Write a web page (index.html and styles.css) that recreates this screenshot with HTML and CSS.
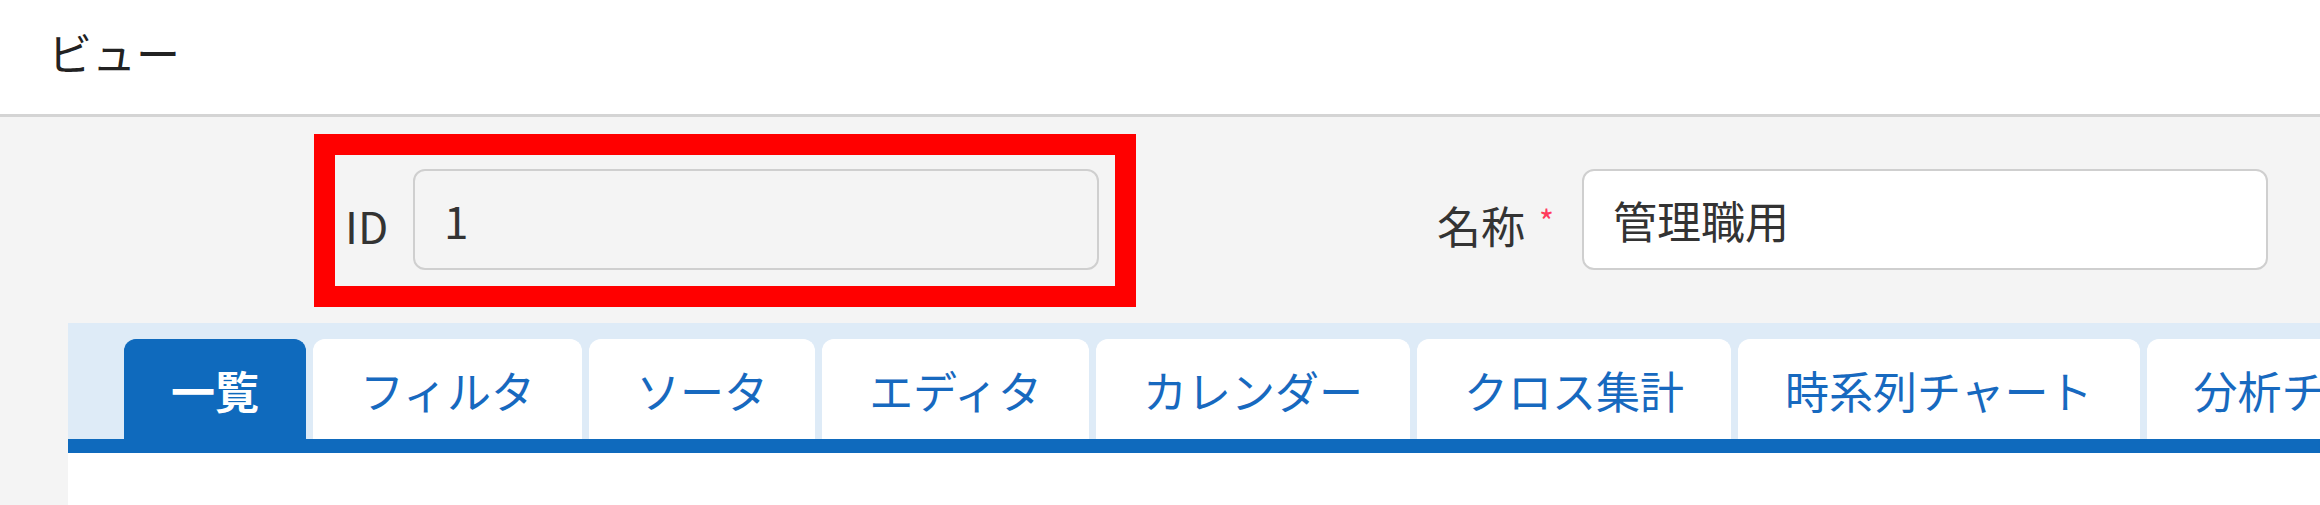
FILE: index.html
```html
<!DOCTYPE html>
<html lang="ja">
<head>
<meta charset="utf-8">
<title>ビュー</title>
<link rel="stylesheet" href="styles.css">
</head>
<body>
<header class="page-header">
  <h1 class="page-title">ビュー</h1>
</header>
<main class="page-body">
  <div class="form-row">
    <div class="field field-id highlight">
      <label class="field-label">ID</label>
      <div class="input input-readonly">1</div>
    </div>
    <div class="field field-name">
      <label class="field-label">名称<span class="required">*</span></label>
      <div class="input">管理職用</div>
    </div>
  </div>
  <section class="panel">
    <nav class="tabs">
      <div class="tab active">一覧</div>
      <div class="tab">フィルタ</div>
      <div class="tab">ソータ</div>
      <div class="tab">エディタ</div>
      <div class="tab">カレンダー</div>
      <div class="tab">クロス集計</div>
      <div class="tab">時系列チャート</div>
      <div class="tab">分析チャート</div>
    </nav>
    <div class="panel-content"></div>
  </section>
</main>
</body>
</html>
```

FILE: styles.css
```css
html, body {
  margin: 0;
  padding: 0;
}
body {
  width: 2320px;
  height: 505px;
  overflow: hidden;
  background: #f4f4f4;
  font-family: "Noto Sans CJK JP", "Noto Sans", sans-serif;
  color: #333333;
}
.page-header {
  height: 114px;
  background: #ffffff;
  border-bottom: 3px solid #d4d4d4;
  display: flex;
  align-items: center;
  padding-left: 48px;
  box-sizing: content-box;
}
.page-title {
  margin: 0 0 11px 0;
  font-size: 44px;
  font-weight: 400;
  line-height: normal;
  color: #222222;
}
.page-body {
  padding-top: 52px;
}
.form-row {
  display: flex;
  align-items: center;
  padding-left: 345px;
  padding-right: 52px;
}
.field {
  display: flex;
  align-items: center;
}
.field-id {
  flex: none;
}
.field-name {
  flex: 1;
}
.field-label {
  font-size: 44px;
  line-height: normal;
  padding-top: 11px;
  color: #333333;
  white-space: nowrap;
}
.field-id .field-label {
  width: 68px;
  box-sizing: border-box;
}
.field-name .field-label {
  flex: 1;
  text-align: right;
  padding-right: 28px;
}
.required {
  color: #ff3b5c;
  font-size: 32px;
  vertical-align: 10px;
  margin-left: 14px;
}
.input {
  width: 686px;
  height: 101px;
  box-sizing: border-box;
  border: 2px solid #cfcfcf;
  border-radius: 12px;
  background: #ffffff;
  font-size: 44px;
  line-height: normal;
  padding-left: 29px;
  display: flex;
  align-items: center;
  color: #333333;
}
.input-readonly {
  background: #f4f4f4;
}
.highlight {
  position: relative;
}
.highlight::after {
  content: "";
  position: absolute;
  top: -35px;
  right: -37px;
  bottom: -37px;
  left: -31px;
  border: 21px solid #ff0000;
  pointer-events: none;
}
.panel {
  margin-top: 53px;
  margin-left: 68px;
  background: #ffffff;
}
.tabs {
  display: flex;
  gap: 7px;
  background: #deebf7;
  padding: 16px 0 0 56px;
  border-bottom: 14px solid #0f6abd;
  white-space: nowrap;
  overflow: hidden;
}
.tab {
  flex: none;
  height: 100px;
  box-sizing: border-box;
  padding: 0 46px;
  border: 1px solid #ffffff;
  border-bottom: 0;
  border-radius: 12px 12px 0 0;
  background: #ffffff;
  color: #1769bf;
  font-size: 44px;
  line-height: normal;
  display: flex;
  align-items: center;
}
.tab.active {
  background: #0f6abd;
  border-color: #0f6abd;
  color: #ffffff;
  font-weight: 700;
}
.panel-content {
  height: 52px;
  background: #ffffff;
}
```
